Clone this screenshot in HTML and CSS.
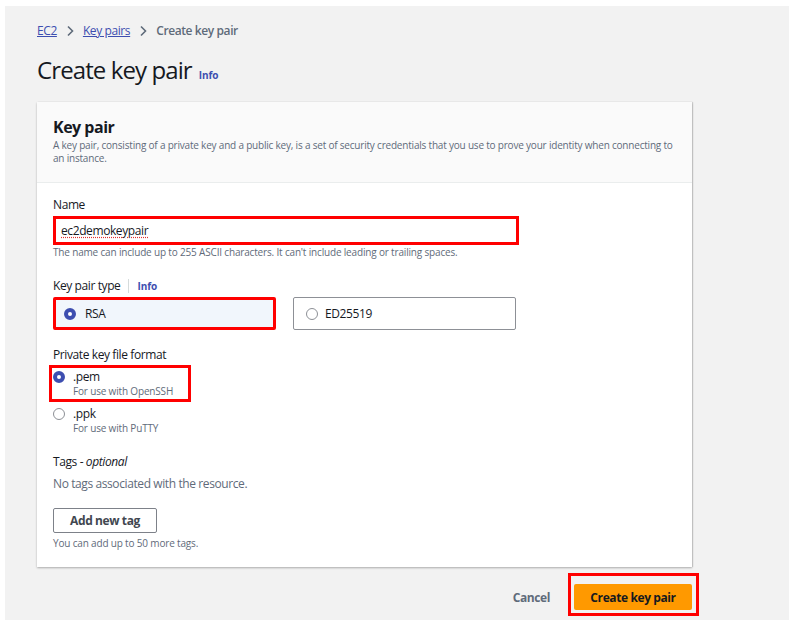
FILE: index.html
```html
<!DOCTYPE html>
<html lang="en">
<head>
<meta charset="utf-8">
<title>Create key pair</title>
<link rel="stylesheet" href="styles.css">
</head>
<body>
<div class="page">
  <nav class="crumbs">
    <a href="#" class="crumb-link">EC2</a>
    <svg class="chev" width="8" height="12" viewBox="0 0 8 12"><path d="M2 1.5 L6.5 6 L2 10.5" fill="none" stroke="#5f6b7a" stroke-width="1.6"/></svg>
    <a href="#" class="crumb-link">Key pairs</a>
    <svg class="chev" width="8" height="12" viewBox="0 0 8 12"><path d="M2 1.5 L6.5 6 L2 10.5" fill="none" stroke="#5f6b7a" stroke-width="1.6"/></svg>
    <span class="crumb-current">Create key pair</span>
  </nav>

  <h1 class="title">Create key pair <a href="#" class="info">Info</a></h1>

  <section class="card">
    <header class="card-head">
      <h2 class="card-title">Key pair</h2>
      <p class="card-desc">A key pair, consisting of a private key and a public key, is a set of security credentials that you use to prove your identity when connecting to an instance.</p>
    </header>
    <div class="card-body">
      <div class="field">
        <label class="label">Name</label>
        <div class="input hl"><span class="typed">ec2demokeypair</span></div>
        <p class="hint">The name can include up to 255 ASCII characters. It can't include leading or trailing spaces.</p>
      </div>

      <div class="field f-type">
        <div class="label-row"><span class="label">Key pair type</span><span class="sep"></span><a href="#" class="info small">Info</a></div>
        <div class="tiles">
          <div class="tile tile-on hl"><span class="radio on"></span><span class="tile-text">RSA</span></div>
          <div class="tile"><span class="radio"></span><span class="tile-text">ED25519</span></div>
        </div>
      </div>

      <div class="field f-format">
        <span class="label">Private key file format</span>
        <div class="opt opt-hl">
          <span class="radio on"></span>
          <div class="opt-text"><div class="opt-main">.pem</div><div class="opt-sub">For use with OpenSSH</div></div>
        </div>
        <div class="opt opt2">
          <span class="radio"></span>
          <div class="opt-text"><div class="opt-main">.ppk</div><div class="opt-sub">For use with PuTTY</div></div>
        </div>
      </div>

      <div class="field f-tags">
        <span class="label">Tags - <i>optional</i></span>
        <p class="empty">No tags associated with the resource.</p>
        <button class="btn-normal">Add new tag</button>
        <p class="hint">You can add up to 50 more tags.</p>
      </div>
    </div>
  </section>

  <div class="footer">
    <span class="cancel">Cancel</span>
    <span class="btn-wrap"><button class="btn-primary">Create key pair</button></span>
  </div>
</div>
</body>
</html>
```

FILE: styles.css
```css
* { box-sizing: border-box; }
html, body { margin: 0; padding: 0; background: #ffffff; }
body {
  font-family: "Open Sans", "Noto Sans", sans-serif;
  letter-spacing: -0.4px;
  color: #16191f;
}
.page {
  margin: 6px 9px 0 5px;
  height: 614px;
  background: #f2f2f2;
  padding: 17px 32px 0 32px;
}
.crumbs {
  display: flex;
  align-items: center;
  gap: 9px;
  height: 16px;
  font-size: 12px;
  line-height: 16px;
}
.crumb-link { color: #3d4eb0; text-decoration: underline; }
.crumb-current { color: #5f6b7a; font-weight: 600; }
.chev { display: block; }
.title {
  margin: 16px 0 0 0;
  font-size: 24px;
  line-height: 30px;
  font-weight: 400;
  letter-spacing: -0.9px;
  display: flex;
  align-items: baseline;
  gap: 7px;
}
.info { color: #3d4eb0; font-size: 10px; font-weight: 700; text-decoration: none; letter-spacing: -0.1px; }
.card {
  margin-top: 12px;
  width: 655px;
  background: #fff;
  box-shadow: 0 1px 2px rgba(0,0,0,0.28), 1px 0 1px rgba(0,0,0,0.12);
}
.card-head {
  background: #fafafa;
  padding: 15px 16px 17px 16px;
  border-bottom: 1px solid #eaeded;
}
.card-title { margin: 0; font-size: 16px; line-height: 20px; font-weight: 700; letter-spacing: -0.5px; }
.card-desc { margin: 2px 0 0; font-size: 10px; line-height: 13px; color: #5f6b7a; letter-spacing: -0.2px; }
.card-body { padding: 14px 16px 17px 16px; }
.field { display: flex; flex-direction: column; align-items: flex-start; }
.label { font-size: 12px; line-height: 16px; color: #16191f; }
.hl { border: 3px solid #ff0000 !important; }
.input {
  margin-top: 3px;
  width: 466px;
  height: 29px;
  padding: 0 5px;
  display: flex;
  align-items: center;
  background: #fff;
  font-size: 12px;
}
.typed {
  text-decoration: underline dotted #e03030;
  text-underline-offset: 2px;
}
.hint { margin: 1px 0 0; font-size: 10px; line-height: 13px; color: #5f6b7a; letter-spacing: -0.17px; }
.f-type { margin-top: 19px; }
.label-row { display: flex; align-items: center; height: 16px; }
.sep { width: 1px; height: 14px; background: #d5dbdb; margin: 0 8px 0 8px; }
.tiles { display: flex; gap: 17px; margin-top: 3px; }
.tile {
  width: 223px;
  height: 33px;
  border: 1px solid #8d9096;
  border-radius: 2px;
  display: flex;
  align-items: center;
  padding-left: 12px;
  gap: 7px;
  font-size: 12px;
}
.tile-on { background: #f1f6fc; padding-left: 8px; gap: 9px; }
.radio {
  width: 12px; height: 12px;
  border-radius: 50%;
  border: 1.5px solid #8d9096;
  background: #fff;
  flex: none;
}
.radio.on { border: 4px solid #3d4eb0; }
.f-format { margin-top: 17px; }
.opt { display: flex; align-items: flex-start; gap: 8px; margin-top: 6px; }
.opt .radio { margin-top: 2px; }
.opt-hl { outline: 3px solid #ff0000; outline-offset: 1px; width: 134px; }
.opt2 { margin-top: 8px; }
.opt-main { font-size: 12px; line-height: 16px; }
.opt-sub { font-size: 10px; line-height: 13px; color: #5f6b7a; letter-spacing: -0.17px; }
.f-tags { margin-top: 19px; }
.empty { margin: 6px 0 0; font-size: 12px; line-height: 16px; color: #5f6b7a; }
.btn-normal {
  margin-top: 16px;
  width: 104px;
  height: 25px;
  border: 1px solid #7d8189;
  border-radius: 2px;
  background: #fff;
  font-family: inherit;
  letter-spacing: -0.4px;
  font-size: 12px;
  font-weight: 700;
  color: #414750;
}
.f-tags .hint { margin-top: 4px; }
.footer {
  width: 662px;
  margin-top: 6px;
  display: flex;
  justify-content: flex-end;
  align-items: center;
  gap: 18px;
}
.cancel { font-size: 12px; font-weight: 700; color: #5f6b7a; padding-top: 5px; }
.btn-wrap { border: 3px solid #ff0000; padding: 8px 4px 3px 3px; display: flex; }
.btn-primary {
  width: 118px;
  height: 26px;
  background: #ff9900;
  border: none;
  border-radius: 2px;
  font-family: inherit;
  letter-spacing: -0.4px;
  font-size: 12px;
  font-weight: 700;
  color: #16191f;
}
```
